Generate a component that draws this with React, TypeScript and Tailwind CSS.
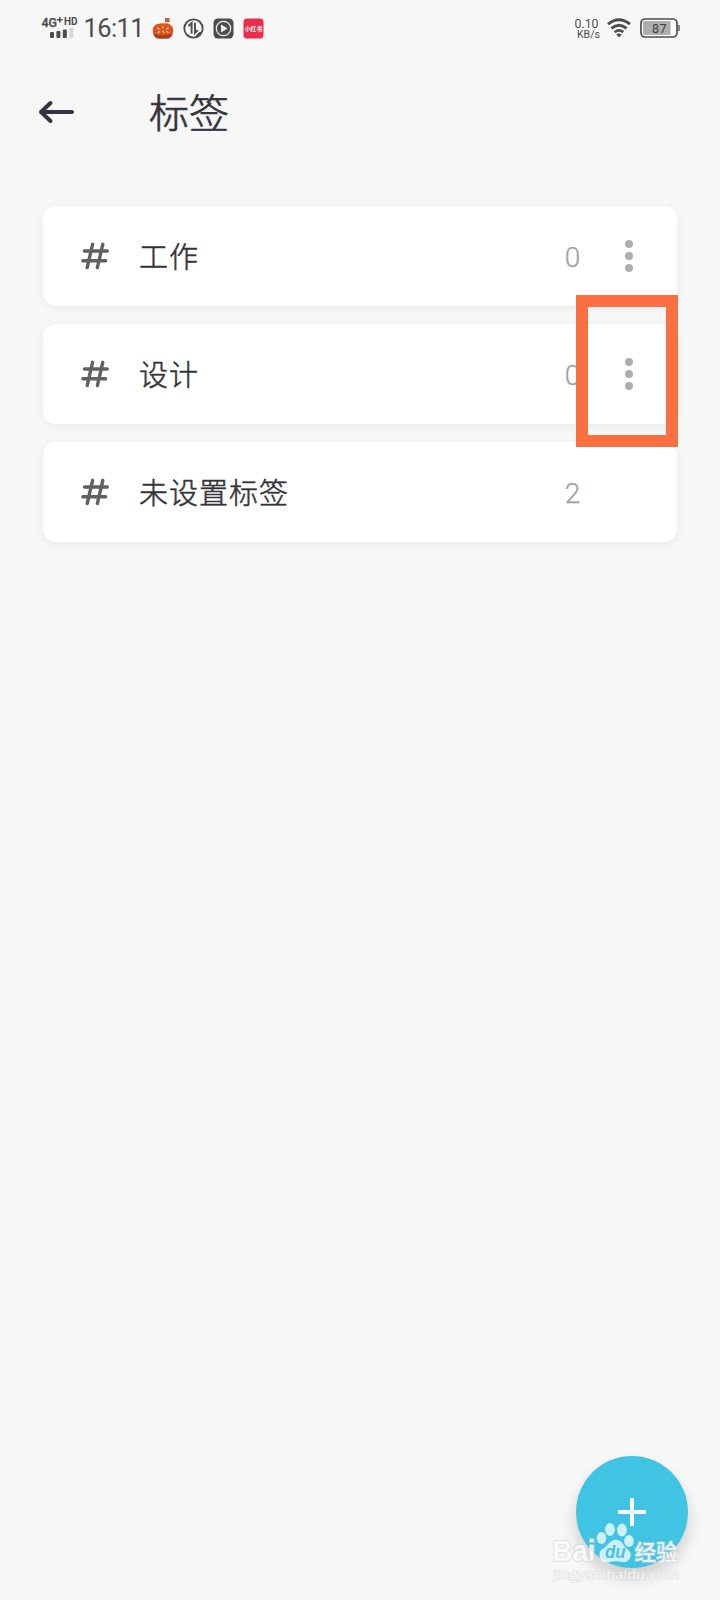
import React from "react";

const SANS = "font-['Roboto','Noto_Sans_CJK_SC',sans-serif]";

function StatusBar() {
  return (
    <header className={`flex h-[56px] items-center justify-between pl-[41px] pr-[40px] text-[#4c4c4c] ${SANS}`}>
      <div className="flex items-center">
        <svg className="h-[28px] w-[38px]" viewBox="0 0 38 28">
          <text x="0.5" y="12.8" fontSize="13" fontWeight="500" fill="#4c4c4c" stroke="#4c4c4c" strokeWidth="0.3" textLength="15.5" lengthAdjust="spacingAndGlyphs">4G</text>
          <path d="M18.800 3v5.600M16 5.800h5.600" stroke="#4c4c4c" strokeWidth="1.500" />
          <text x="23" y="10.5" fontSize="10" fontWeight="700" fill="#4c4c4c" textLength="13.500" lengthAdjust="spacingAndGlyphs">HD</text>
          <rect x="9" y="18" width="4" height="6" rx="1" fill="#4c4c4c" />
          <rect x="15.400" y="17" width="4" height="7" rx="1" fill="#4c4c4c" />
          <rect x="21.800" y="15.400" width="4" height="8.600" rx="1" fill="#4c4c4c" />
          <rect x="28.400" y="14" width="4" height="10" rx="1" fill="#d9d9d9" />
        </svg>
        <svg className="ml-[4px] h-[28px] w-[62px]" viewBox="0 0 62 28">
          <text x="0.5" y="23" fontSize="25.500" fill="#4c4c4c" textLength="61">16:11</text>
        </svg>
        <svg className="ml-[7px] h-[22px] w-[22px]" viewBox="0 0 22 22">
          <path d="M1 6Q4 1 12 2.500V8H1z" fill="#fdfdfd" />
          <rect x="13" y="1" width="4.500" height="4" fill="#b5644c" />
          <path d="M13.500 5h3.500v3h-3.500z" fill="#f2c3a8" />
          <path d="M4 7.500Q11 5 18 7.500Q23 11 20.500 17Q19 21.500 15 21.500H7Q3 21.500 1.500 17Q-1 11 4 7.500Z" fill="#d9541f" />
          <path d="M1.200 16.500Q11 20 20.700 16.500Q19 21.500 15 21.500H7Q3 21.500 1.200 16.500Z" fill="#ad3d17" />
          <path d="M5.500 11l1.500 1M10.500 9.500l.5 1.500M16 11l-1.500 1M6 16l1.500-1.500M11 14l1 1.500M16 15.500l-1-1" stroke="#ffd2a0" strokeWidth="1.200" strokeLinecap="round" />
        </svg>
        <svg className="ml-[9px] h-[21px] w-[21px]" viewBox="0 0 21 21" fill="none" stroke="#4c4c4c">
          <circle cx="10.500" cy="10.500" r="9.200" strokeWidth="1.800" />
          <path d="M5.500 8L8.600 5V15.500M12 4.800V15L14.800 12.200" strokeWidth="1.900" />
          <path d="M13.500 19Q14 14.500 19 14L16 18z" fill="#4c4c4c" strokeWidth="1" />
        </svg>
        <svg className="ml-[9px] h-[21px] w-[21px]" viewBox="0 0 21 21">
          <rect x="0.500" y="0.500" width="20" height="20" rx="4.500" fill="#4c4c4c" />
          <circle cx="10.500" cy="10.500" r="7.200" fill="none" stroke="#f5f5f5" strokeWidth="1.200" />
          <path d="M8 6.500v8l6.500-4z" fill="#f5f5f5" />
        </svg>
        <svg className="ml-[9px] h-[21px] w-[21px]" viewBox="0 0 21 21">
          <rect x="0.500" y="0.500" width="20" height="20" rx="3.500" fill="#e92d4d" />
          <text x="1.800" y="12.800" fontSize="5.800" fontWeight="700" fill="#fff">小红书</text>
        </svg>
      </div>
      <div className="flex items-center">
        <svg className="h-[28px] w-[30px]" viewBox="0 0 30 28">
          <text x="0.500" y="13.500" fontSize="12" fill="#4c4c4c" textLength="24" lengthAdjust="spacingAndGlyphs">0.10</text>
          <text x="3" y="23.500" fontSize="10.500" fill="#4c4c4c" textLength="23" lengthAdjust="spacingAndGlyphs">KB/s</text>
        </svg>
        <svg className="ml-[3px] h-[20px] w-[24px]" viewBox="0 0 24 20" fill="none" stroke="#4c4c4c" strokeWidth="2.800">
          <path d="M1 6.200Q12-2.800 23 6.200" />
          <path d="M4.400 10.400Q12 4 19.600 10.400" />
          <path d="M7.800 14.200Q12 10.600 16.200 14.200" />
          <path d="M9.200 16.600Q12 14.400 14.800 16.600L12 19.600z" fill="#4c4c4c" stroke="none" />
        </svg>
        <svg className="ml-[9px] h-[20px] w-[40px]" viewBox="0 0 40 20">
          <rect x="1" y="1" width="36" height="18" rx="4" fill="#fff" stroke="#4c4c4c" strokeWidth="1.700" />
          <path d="M5 3h25.500v14H5q-2 0-2-2V5q0-2 2-2" fill="#adadad" />
          <path d="M39 7v6" stroke="#4c4c4c" strokeWidth="1.300" />
          <text x="12" y="14.500" fontSize="12.500" fill="#3c3c3c" textLength="14.500">87</text>
        </svg>
      </div>
    </header>
  );
}

function TagRow({ name, count, menu = true }: { name: string; count: number; menu?: boolean }) {
  return (
    <li className="flex h-[100px] items-center rounded-[13px] bg-white pl-[38px] shadow-[0_2px_10px_rgba(0,0,0,0.06)]">
      <svg className="h-[28px] w-[28px] shrink-0" viewBox="0 0 28 28" fill="none" stroke="#616161" strokeWidth="3.400" strokeLinecap="round">
        <path d="M11.600 2.300L6.200 25.500M21.800 2.300L16.400 25.500M3.500 9H26.300M1.800 18.800H24.600" />
      </svg>
      <span className="mb-[2px] ml-[30px] flex-1 text-[29px] font-light leading-[40px] tracking-[1px] text-[#333337] [-webkit-text-stroke:0.5px_#333337]">{name}</span>
      <span className="mt-[4px] w-[17px] text-center font-['Roboto',sans-serif] text-[28px] font-light leading-[36px] text-[#a3a3a3] [-webkit-text-stroke:0.3px_#a3a3a3]">{count}</span>
      <div className="ml-[44px] flex w-[52px] flex-col items-start gap-[4px]">
        {menu && [0, 1, 2].map((i) => <i key={i} className="size-[8px] rounded-full bg-[#adadad]" />)}
      </div>
    </li>
  );
}

function Watermark() {
  return (
    <svg className="absolute left-[548px] top-[1518px] h-[66px] w-[136px] font-['Open_Sans','Noto_Sans_CJK_SC',sans-serif]" viewBox="0 0 136 66">
      <g fill="#ffffff" fillOpacity="0.8" stroke="#cfd4d5" strokeOpacity="0.6" strokeWidth="2" strokeLinejoin="round" paintOrder="stroke">
        <text x="4.500" y="43" fontSize="29" fontWeight="700" textLength="43" lengthAdjust="spacingAndGlyphs" className="font-['Liberation_Sans',sans-serif]">Bai</text>
        <text x="86.500" y="42" fontSize="21.500" fontWeight="500" textLength="43">经验</text>
        <text x="5" y="61" fontSize="13.500" fontWeight="400" textLength="126" lengthAdjust="spacingAndGlyphs" strokeWidth="1.400">jingyan.baidu.com</text>
      </g>
      <g fill="#ffffff" fillOpacity="0.74">
        <ellipse cx="53.500" cy="20" rx="4.800" ry="6" />
        <ellipse cx="62" cy="11.500" rx="4.900" ry="6.500" />
        <ellipse cx="74" cy="12" rx="4.900" ry="6.500" />
        <ellipse cx="81" cy="23" rx="4.900" ry="6" />
        <path d="M53 32Q57 30 62 24Q68 19 73.500 24Q76 29 80.500 32Q84 36 82 40Q80 45 74 44Q68 42.500 62 44Q54 45.500 52 40Q50.500 35 53 32Z" />
      </g>
      <text x="57" y="39.500" fontSize="17.500" fontWeight="700" fontStyle="italic" fill="#41c3e3" textLength="20.500" lengthAdjust="spacingAndGlyphs" className="font-['Liberation_Sans',sans-serif]">du</text>
    </svg>
  );
}

export default function App() {
  return (
    <div className="relative flex h-[1600px] w-[720px] flex-col overflow-hidden bg-[#f7f7f7] font-['Noto_Sans_CJK_SC',sans-serif]">
      <StatusBar />
      <div className="flex h-[112px] items-center pl-[38px]">
        <svg className="h-[24px] w-[37px]" viewBox="0 0 37 24" fill="none" stroke="#343341" strokeWidth="4" strokeLinecap="round" strokeLinejoin="round">
          <path d="M34 12H3M12.500 3L3 12L12.500 21" />
        </svg>
        <h1 className="mb-[2px] ml-[74px] text-[40px] font-light leading-[56px] text-[#34343b] [-webkit-text-stroke:0.7px_#34343b]">标签</h1>
      </div>
      <ul className="mt-[38px] flex flex-col gap-[18px] pl-[43px] pr-[43px]">
        <TagRow name="工作" count={0} />
        <TagRow name="设计" count={0} />
        <TagRow name="未设置标签" count={2} menu={false} />
      </ul>
      <div className="absolute left-[576px] top-[295px] h-[152px] w-[102px] border-[12px] border-[#fb7042]" />
      <button aria-label="添加" className="absolute left-[576px] top-[1456px] flex size-[112px] items-center justify-center rounded-full bg-[#41c3e3] shadow-[0_10px_16px_rgba(0,0,0,0.17)]">
        <svg className="size-[28px]" viewBox="0 0 28 28" stroke="#fff" strokeWidth="4">
          <path d="M14 0v28M0 14h28" />
        </svg>
      </button>
      <Watermark />
    </div>
  );
}
